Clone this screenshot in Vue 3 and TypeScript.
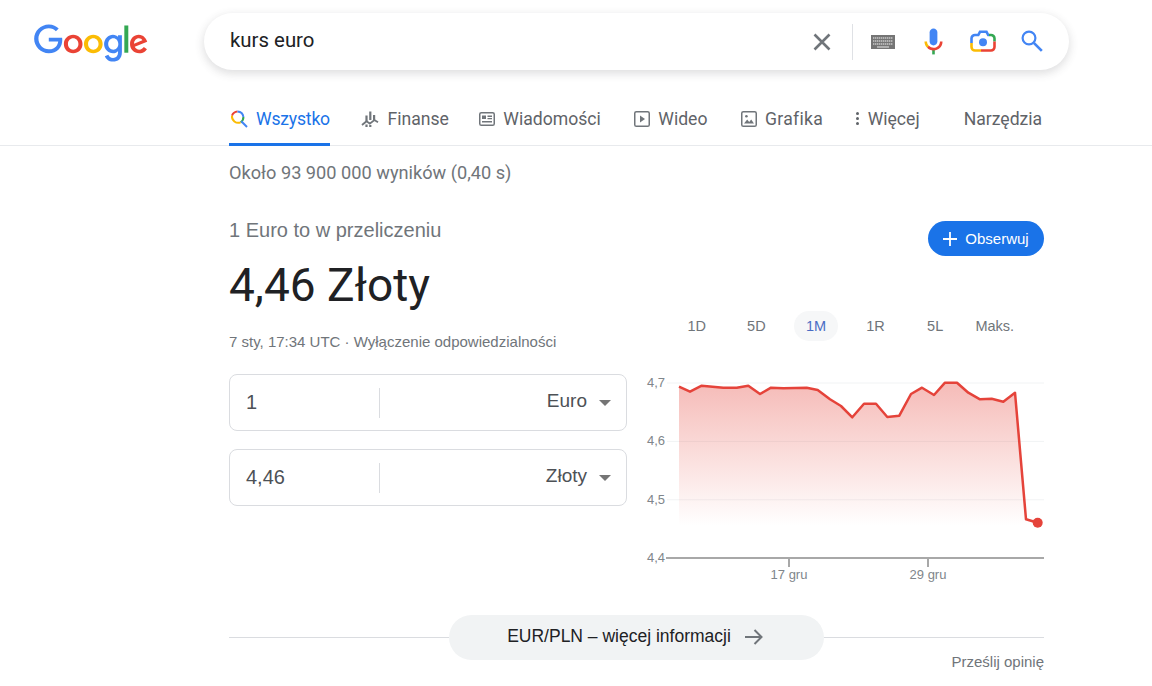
<script setup lang="ts">
// Wyniki wyszukiwania: kurs euro, przelicznik i wykres
const tabs = [
  { label: 'Finanse', icon: 'finance' },
  { label: 'Wiadomości', icon: 'news' },
  { label: 'Wideo', icon: 'video' },
  { label: 'Grafika', icon: 'image' },
]

const ranges = ['1D', '5D', '1M', '1R', '5L', 'Maks.']

const converters = [
  { value: '1', unit: 'Euro' },
  { value: '4,46', unit: 'Złoty' },
]

// punkty wykresu w układzie strony, przesunięte o początek płótna
const originX = 640
const originY = 370
const raw: [number, number][] = [
  [679, 386.7], [690, 391.7], [701.7, 385.7], [723.3, 387.7], [736.7, 387.7], [748.3, 385.7],
  [760, 394], [771, 387.7], [783.3, 388.3], [806.7, 387.7], [817.7, 390], [830, 399.3],
  [841, 406], [852.3, 417.3], [864, 403.7], [876, 403.7], [887.3, 417], [899.3, 415.7],
  [911, 394], [922, 387.7], [934, 395], [945, 382.7], [957, 382.7], [968.3, 392.7],
  [980, 399.3], [991.7, 398.7], [1003.3, 401.7], [1015, 392.7], [1026, 519.3], [1037.7, 522.8],
]
const points = raw.map(([x, y]) => `${x - originX},${y - originY}`).join(' ')
const area = `${points} ${1037.7 - originX},${557 - originY} ${679 - originX},${557 - originY}`
const last = raw[raw.length - 1]

const grid = [
  { y: 13, label: '4,7' },
  { y: 71.4, label: '4,6' },
  { y: 129.8, label: '4,5' },
]
</script>

<template>
  <div class="page">
    <header class="top">
      <svg class="logo" viewBox="0 0 272 92" aria-label="Google">
        <path fill="#EA4335" d="M115.75 47.18c0 12.77-9.99 22.18-22.25 22.18s-22.25-9.41-22.25-22.18C71.25 34.32 81.24 25 93.5 25s22.25 9.32 22.25 22.18zm-9.74 0c0-7.98-5.79-13.44-12.51-13.44S80.99 39.2 80.99 47.18c0 7.9 5.79 13.44 12.51 13.44s12.51-5.55 12.51-13.44z" />
        <path fill="#FBBC05" d="M163.75 47.18c0 12.77-9.99 22.18-22.25 22.18s-22.25-9.41-22.25-22.18c0-12.85 9.99-22.18 22.25-22.18s22.25 9.32 22.25 22.18zm-9.74 0c0-7.98-5.79-13.44-12.51-13.44s-12.51 5.46-12.51 13.44c0 7.9 5.79 13.44 12.51 13.44s12.51-5.55 12.51-13.44z" />
        <path fill="#4285F4" d="M209.75 26.34v39.82c0 16.38-9.66 23.07-21.08 23.07-10.75 0-17.22-7.19-19.66-13.07l8.48-3.53c1.51 3.61 5.21 7.87 11.17 7.87 7.31 0 11.84-4.51 11.84-13v-3.19h-.34c-2.18 2.69-6.38 5.04-11.68 5.04-11.09 0-21.25-9.66-21.25-22.09 0-12.52 10.16-22.26 21.25-22.26 5.29 0 9.49 2.35 11.68 4.96h.34v-3.61h9.25zm-8.56 20.92c0-7.81-5.21-13.52-11.84-13.52-6.72 0-12.35 5.71-12.35 13.52 0 7.73 5.63 13.36 12.35 13.36 6.63 0 11.84-5.63 11.84-13.36z" />
        <path fill="#34A853" d="M225 3v65h-9.5V3h9.5z" />
        <path fill="#EA4335" d="M262.02 54.48l7.56 5.04c-2.44 3.61-8.32 9.83-18.48 9.83-12.6 0-22.01-9.74-22.01-22.18 0-13.19 9.49-22.18 20.92-22.18 11.51 0 17.14 9.16 18.98 14.11l1.01 2.52-29.65 12.28c2.27 4.45 5.8 6.72 10.75 6.72 4.96 0 8.4-2.44 10.92-6.14zm-23.27-7.98l19.82-8.23c-1.09-2.77-4.37-4.7-8.23-4.7-4.95 0-11.84 4.37-11.59 12.93z" />
        <path fill="#4285F4" d="M35.29 41.41V32H67c.31 1.64.47 3.58.47 5.68 0 7.06-1.93 15.79-8.15 22.01-6.05 6.3-13.78 9.66-24.02 9.66C16.32 69.35.36 53.89.36 34.91.36 15.93 16.32.47 35.3.47c10.5 0 17.98 4.12 23.6 9.49l-6.64 6.64c-4.03-3.78-9.49-6.72-16.97-6.72-13.86 0-24.7 11.17-24.7 25.03 0 13.86 10.84 25.03 24.7 25.03 8.99 0 14.11-3.61 17.39-6.89 2.66-2.66 4.41-6.46 5.1-11.65l-22.49.01z" />
      </svg>
      <div class="search">
        <span class="query">kurs euro</span>
        <svg class="ic-clear" viewBox="0 0 18 18">
          <path d="M1.5 1.5l15 15M16.5 1.5l-15 15" fill="none" stroke="#70757a" stroke-width="2.6" />
        </svg>
        <span class="search-sep"></span>
        <svg class="ic-keyboard" viewBox="0 0 24 14">
          <rect width="24" height="14" fill="#757575" />
          <path d="M2 3h20M2 6h20M2 9h20" stroke="#c9c9c9" stroke-width="1.4" stroke-dasharray="1.4 .6" />
          <path d="M6 12h12" stroke="#c9c9c9" stroke-width="1.4" />
        </svg>
        <svg class="ic-mic" viewBox="0 0 24 24">
          <path fill="#4285f4" d="m12 15c1.66 0 3-1.31 3-2.97v-7.02c0-1.66-1.34-3.01-3-3.01s-3 1.34-3 3.01v7.02c0 1.66 1.34 2.97 3 2.97z" />
          <path fill="#34a853" d="m11 18.08h2v3.92h-2z" />
          <path fill="#fbbc05" d="m7.05 16.87c-1.27-1.33-2.05-2.83-2.05-4.87h2c0 1.45 0.56 2.42 1.47 3.38v0.32l-1.15 1.18z" />
          <path fill="#ea4335" d="m12 16.93a4.97 5.25 0 0 1 -3.54 -1.55l-1.41 1.49c1.26 1.34 3.02 2.13 4.95 2.13 3.87 0 6.99-2.92 6.99-7h-1.99c0 2.92-2.24 4.93-5 4.93z" />
        </svg>
        <svg class="ic-lens" viewBox="0 0 26 23" fill="none" stroke-width="2.6">
          <path stroke="#4285f4" d="M1.5 13V8.5A3.5 3.5 0 0 1 5 5H8.3L10 1.8H16.5L18.2 5H19" />
          <path stroke="#34a853" d="M19 5H21A3.5 3.5 0 0 1 24.5 8.5V11.5" />
          <path stroke="#ea4335" d="M24.5 11.5V17A3.5 3.5 0 0 1 21 20.5H11" />
          <path stroke="#fbbc04" d="M1.5 13V17A3.5 3.5 0 0 0 5 20.5H11" />
          <circle cx="13" cy="12.2" r="4" fill="#4285f4" />
        </svg>
        <svg class="ic-search" viewBox="0 0 22 22" fill="none" stroke="#4285f4">
          <circle cx="8" cy="8" r="6.4" stroke-width="2.2" />
          <path d="M12.8 12.8l8 8" stroke-width="2.6" />
        </svg>
      </div>
    </header>

    <nav class="tabs">
      <a class="tab tab-active">
        <svg class="tab-ic-all" viewBox="0 0 18 18" fill="none" stroke-width="2">
          <path stroke="#ea4335" d="M2 5.6A6.4 6.4 0 0 1 7.5 1.4" />
          <path stroke="#4285f4" d="M7.5 1.4A6.4 6.4 0 0 1 13.4 7" />
          <path stroke="#34a853" d="M13.4 7A6.4 6.4 0 0 1 10.6 12.4" />
          <path stroke="#fbbc04" d="M10.6 12.4A6.4 6.4 0 0 1 2 5.6" />
          <path stroke="#4285f4" d="M11.3 11.3l5.7 5.7" />
        </svg>
        Wszystko
      </a>
      <a v-for="t in tabs" :key="t.label" class="tab" :class="`tab-${t.icon}`">
        <svg v-if="t.icon === 'finance'" class="tab-ic-fin" viewBox="0 0 18 18" fill="#70757a">
          <path d="M4.4 5.5h2.2v6H4.400zM8.200 1.500h2.200v8.500H8.200zM12 5h2.200v5H12z" />
          <path d="M1 15l4.600-3.800 3.200 2.400 4.600-3.600 3.600 2.200" fill="none" stroke="#70757a" stroke-width="1.800" />
          <path d="M4.400 14.500h2.200V17H4.400zM8.200 15h2.200v2H8.200z" />
        </svg>
        <svg v-else-if="t.icon === 'news'" class="tab-ic" viewBox="0 0 16 14">
          <rect x=".75" y=".75" width="14.5" height="12.5" rx="1.6" fill="none" stroke="#70757a" stroke-width="1.5" />
          <path d="M3 3.5h4v3.5H3zM8.5 3.6h4.5v1.3H8.5zM8.5 6h4.5v1.3H8.5zM3 9h10v1.4H3z" fill="#70757a" />
        </svg>
        <svg v-else-if="t.icon === 'video'" class="tab-ic" viewBox="0 0 16 16">
          <rect x=".75" y=".75" width="14.5" height="14.5" rx="1.6" fill="none" stroke="#70757a" stroke-width="1.5" />
          <path d="M6 4.6v6.8L11 8z" fill="#70757a" />
        </svg>
        <svg v-else class="tab-ic" viewBox="0 0 16 16">
          <rect x=".75" y=".75" width="14.5" height="14.5" rx="1.6" fill="none" stroke="#70757a" stroke-width="1.5" />
          <circle cx="5.4" cy="5.2" r="1.3" fill="#70757a" />
          <path d="M3 12.6l3.2-4 2 2.3 2-2.4 2.8 4.1z" fill="#70757a" />
        </svg>
        {{ t.label }}
      </a>
      <a class="tab tab-more">
        <span class="dots"><i></i><i></i><i></i></span>
        Więcej
      </a>
      <a class="tab tab-tools">Narzędzia</a>
    </nav>

    <main class="content">
      <p class="stats">Około 93 900 000 wyników (0,40 s)</p>

      <div class="head-row">
        <div class="head-text">
          <div class="from">1 Euro to w przeliczeniu</div>
          <div class="rate">4,46 Złoty</div>
          <div class="meta">7 sty, 17:34 UTC · <span>Wyłączenie odpowiedzialności</span></div>
        </div>
        <div class="head-side">
          <button class="follow">
            <svg viewBox="0 0 14 14" width="14" height="14">
              <path d="M7 0v14M0 7h14" stroke="#fff" stroke-width="1.8" />
            </svg>
            Obserwuj
          </button>
          <div class="ranges">
            <span v-for="r in ranges" :key="r" class="range" :class="{ on: r === '1M' }">{{ r }}</span>
          </div>
        </div>
      </div>

      <div class="body-row">
        <div class="converters">
          <div v-for="c in converters" :key="c.unit" class="conv">
            <span class="conv-value">{{ c.value }}</span>
            <span class="conv-sep"></span>
            <span class="conv-unit">{{ c.unit }}</span>
            <span class="caret"></span>
          </div>
        </div>

        <svg class="chart" viewBox="0 0 404 220" width="404" height="220">
          <defs>
            <linearGradient id="fade" x1="0" y1="0" x2="0" y2="1">
              <stop offset="0" stop-color="#e5433a" stop-opacity=".36" />
              <stop offset=".82" stop-color="#e5433a" stop-opacity="0" />
            </linearGradient>
          </defs>
          <g v-for="g in grid" :key="g.label">
            <line x1="27" x2="404" :y1="g.y" :y2="g.y" stroke="#f1f3f4" />
            <text x="7" :y="g.y + 4" class="axis-text">{{ g.label }}</text>
          </g>
          <polygon :points="area" fill="url(#fade)" />
          <line x1="26" x2="404" y1="188" y2="188" stroke="#a8a8a8" stroke-width="2" />
          <line x1="149" x2="149" y1="188" y2="197" stroke="#a8a8a8" stroke-width="2" />
          <line x1="288" x2="288" y1="188" y2="197" stroke="#a8a8a8" stroke-width="2" />
          <text x="7" y="192" class="axis-text">4,4</text>
          <text x="149" y="209" class="axis-text" text-anchor="middle">17 gru</text>
          <text x="288" y="209" class="axis-text" text-anchor="middle">29 gru</text>
          <polyline :points="points" fill="none" stroke="#e5433a" stroke-width="2.5" stroke-linejoin="round" />
          <circle :cx="last[0] - originX" :cy="last[1] - originY" r="5" fill="#e5433a" />
        </svg>
      </div>

      <div class="more-row">
        <span class="more-line short"></span>
        <a class="more-btn">
          EUR/PLN – więcej informacji
          <svg viewBox="0 0 18 16" width="18" height="16" fill="none" stroke="#70757a" stroke-width="2">
            <path d="M0 8h16M9.500 1l7 7-7 7" />
          </svg>
        </a>
        <span class="more-line"></span>
      </div>
      <div class="feedback">Prześlij opinię</div>
    </main>
  </div>
</template>

<style>
html,
body {
  margin: 0;
  background: #fff;
  overflow: hidden;
}
</style>

<style scoped>
.page {
  width: 1152px;
  height: 686px;
  overflow: hidden;
  font-family: 'Liberation Sans', Arial, sans-serif;
  color: #202124;
}
.top {
  display: flex;
  align-items: flex-start;
  padding: 13px 0 0 34px;
}
.logo {
  width: 114px;
  height: 39px;
  margin: 11px 56px 0 0;
}
.search {
  width: 865px;
  height: 57px;
  box-sizing: border-box;
  padding: 0 26px;
  display: flex;
  align-items: center;
  border-radius: 29px;
  background: #fff;
  box-shadow: 0 3px 9px 1px rgba(64, 60, 67, 0.16);
}
.query {
  flex: 1;
  font: 20.4px Roboto, sans-serif;
  color: #202124;
  margin-top: -3px;
}
.ic-clear {
  width: 18px;
  height: 18px;
  margin-right: 21px;
}
.search-sep {
  width: 1px;
  height: 36px;
  background: #dfe1e5;
  margin-right: 18px;
}
.ic-keyboard {
  width: 24px;
  height: 14px;
  margin-right: 22.5px;
}
.ic-mic {
  width: 31px;
  height: 31px;
  margin-right: 21.5px;
}
.ic-lens {
  width: 26px;
  height: 23px;
  margin-right: 25px;
}
.ic-search {
  width: 22px;
  height: 22px;
  margin-top: -2px;
}
.tabs {
  height: 76px;
  box-sizing: border-box;
  border-bottom: 1px solid #e8eaed;
  padding-left: 229px;
  display: flex;
  align-items: flex-start;
}
.tab {
  display: flex;
  align-items: center;
  gap: 8.5px;
  margin-right: 32px;
  padding-top: 21px;
  box-sizing: border-box;
  height: 76px;
  font: 17.6px Roboto, sans-serif;
  color: #5f6368;
}
.tab-active {
  color: #1a73e8;
  border-bottom: 3px solid #1a73e8;
  padding-top: 24px;
  padding-left: 1px;
  gap: 8px;
  letter-spacing: -0.2px;
  margin-right: 31px;
}
.tab-finance {
  margin-right: 30px;
}
.tab-news,
.tab-video {
  margin-right: 33px;
}
.tab-image {
  letter-spacing: 0.3px;
}
.tab-ic-all,
.tab-ic-fin {
  width: 18px;
  height: 18px;
}
.tab-ic {
  width: 16px;
  height: 16px;
}
.tab-more {
  margin-right: 44px;
}
.tab-tools {
  margin-right: 0;
}
.dots {
  display: flex;
  flex-direction: column;
  gap: 2px;
  margin-left: 1px;
}
.dots i {
  width: 3px;
  height: 3px;
  border-radius: 50%;
  background: #5f6368;
}
.content {
  width: 815px;
  margin-left: 229px;
}
.stats {
  margin: 0;
  padding-top: 17px;
  font: 18.2px Roboto, sans-serif;
  line-height: 20px;
  color: #70757a;
}
.head-row {
  display: flex;
  justify-content: space-between;
  margin-top: 35px;
}
.from {
  font-size: 20px;
  line-height: 24px;
  color: #70757a;
}
.rate {
  font: 46px Roboto, sans-serif;
  line-height: 56px;
  margin-top: 15px;
  color: #202124;
}
.meta {
  margin-top: 20px;
  font-size: 15px;
  line-height: 18px;
  color: #70757a;
}
.head-side {
  width: 388px;
  display: flex;
  flex-direction: column;
  align-items: flex-end;
}
.follow {
  width: 116px;
  height: 35px;
  margin-top: 3px;
  border: 0;
  border-radius: 18px;
  background: #1a73e8;
  color: #fff;
  font: 15px 'Liberation Sans', Arial, sans-serif;
  display: flex;
  align-items: center;
  justify-content: center;
  gap: 8px;
  padding: 0;
}
.ranges {
  align-self: stretch;
  margin-top: 55px;
  padding-left: 11px;
  display: flex;
  font-size: 14.5px;
  color: #70757a;
}
.range {
  width: 59.6px;
  height: 30px;
  line-height: 30px;
  text-align: center;
  flex: none;
}
.range.on {
  color: #4a6cc4;
  position: relative;
  z-index: 0;
}
.range.on::before {
  content: '';
  position: absolute;
  z-index: -1;
  left: 8px;
  right: 8px;
  top: 0;
  height: 30px;
  border-radius: 15px;
  background: #f6f7f8;
}
.body-row {
  display: flex;
  justify-content: space-between;
  margin-top: 23px;
}
.converters {
  width: 398px;
  display: flex;
  flex-direction: column;
  gap: 18px;
}
.conv {
  height: 57px;
  box-sizing: border-box;
  border: 1px solid #dadce0;
  border-radius: 8px;
  display: flex;
  align-items: center;
  padding: 0 15px 0 16px;
  color: #4d5156;
}
.conv-value {
  width: 133px;
  font-size: 20px;
}
.conv-sep {
  width: 1px;
  height: 30px;
  background: #dadce0;
}
.conv-unit {
  flex: 1;
  text-align: right;
  font-size: 19px;
  margin-top: -4px;
}
.caret {
  margin-left: 12px;
  width: 0;
  height: 0;
  border-left: 6px solid transparent;
  border-right: 6px solid transparent;
  border-top: 6px solid #757575;
}
.chart {
  display: block;
  margin-top: -4px;
  flex: none;
}
.axis-text {
  font: 13px 'Liberation Sans', Arial, sans-serif;
  fill: #80868b;
}
.more-row {
  display: flex;
  align-items: center;
  margin-top: 25px;
}
.more-line {
  flex: 1;
  height: 1px;
  background: #dadce0;
}
.more-line.short {
  flex: none;
  width: 220px;
}
.more-btn {
  width: 375px;
  height: 45px;
  box-sizing: border-box;
  padding: 0 3px 2px 0;
  border-radius: 23px;
  background: #f1f3f4;
  display: flex;
  align-items: center;
  justify-content: center;
  gap: 14px;
  font-size: 17.5px;
  color: #202124;
}
.feedback {
  margin-top: -7px;
  text-align: right;
  font-size: 15px;
  color: #70757a;
}
</style>
